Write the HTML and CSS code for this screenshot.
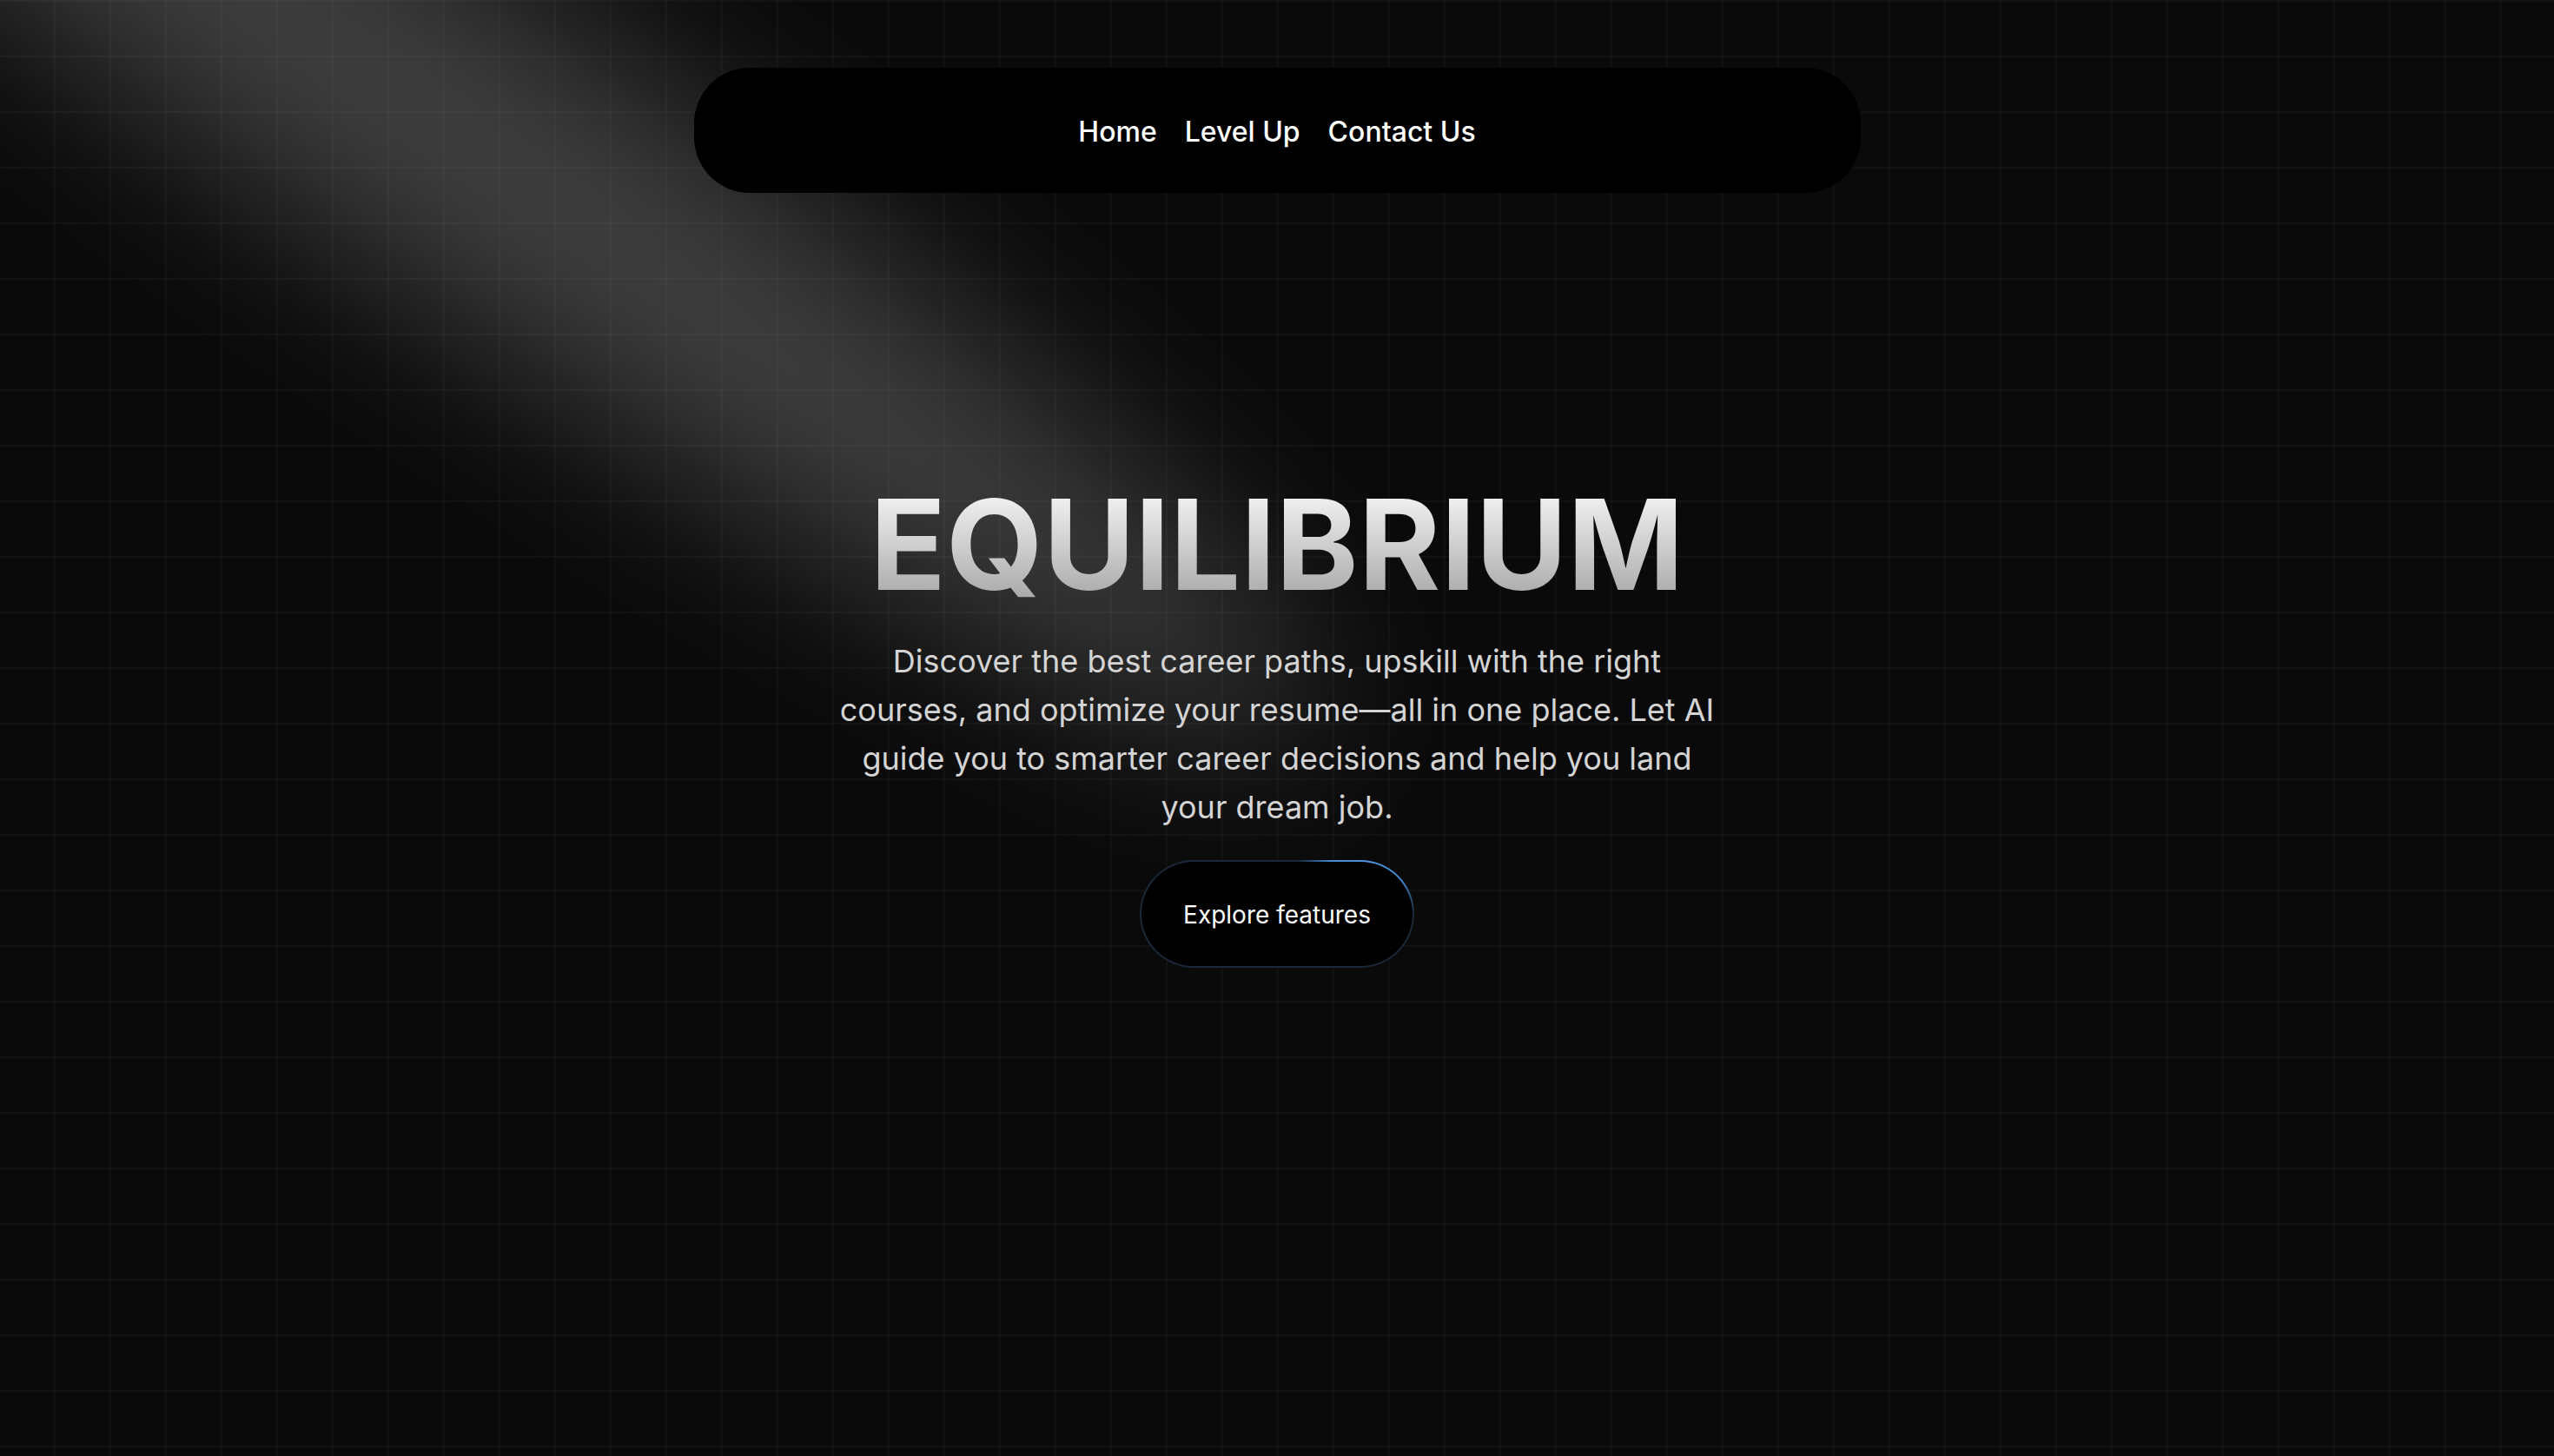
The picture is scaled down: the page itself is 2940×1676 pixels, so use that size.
FILE: index.html
```html
<!DOCTYPE html>
<html lang="en">
<head>
<meta charset="utf-8">
<title>Equilibrium</title>
<link rel="stylesheet" href="styles.css">
</head>
<body>
<div class="page">
  <svg class="spotlight" viewBox="0 0 3787 2842" fill="none" xmlns="http://www.w3.org/2000/svg">
    <g filter="url(#spotBlur)">
      <ellipse cx="1924.71" cy="273.501" rx="1924.71" ry="273.501" transform="matrix(-0.822377 -0.568943 -0.568943 0.822377 3631.88 2291.09)" fill="white" fill-opacity="0.21"></ellipse>
    </g>
    <defs>
      <filter id="spotBlur" x="0.860352" y="0.838989" width="3785.16" height="2840.26" filterUnits="userSpaceOnUse" color-interpolation-filters="sRGB">
        <feFlood flood-opacity="0" result="BackgroundImageFix"></feFlood>
        <feBlend mode="normal" in="SourceGraphic" in2="BackgroundImageFix" result="shape"></feBlend>
        <feGaussianBlur stdDeviation="151"></feGaussianBlur>
      </filter>
    </defs>
  </svg>

  <nav class="nav">
    <a class="nav-link" href="#">Home</a>
    <a class="nav-link" href="#">Level Up</a>
    <a class="nav-link" href="#">Contact Us</a>
  </nav>

  <main class="hero">
    <h1 class="title">EQUILIBRIUM</h1>
    <p class="lead">Discover the best career paths, upskill with the right courses, and optimize your resume—all in one place. Let AI guide you to smarter career decisions and help you land your dream job.</p>
    <button class="cta">Explore features</button>
  </main>
</div>
</body>
</html>
```

FILE: styles.css
```css
* { box-sizing: border-box; }

html, body {
  margin: 0;
  padding: 0;
  background: #0a0a0a;
}

body {
  font-family: Inter, "Noto Sans", "Liberation Sans", sans-serif;
  -webkit-font-smoothing: antialiased;
}

.page {
  position: relative;
  width: 100%;
  height: 1676px;
  overflow: hidden;
  background-color: #0a0a0a;
  background-image:
    linear-gradient(to right, transparent 62px, rgba(255,255,255,0.028) 62px),
    linear-gradient(to bottom, rgba(255,255,255,0.028) 2px, transparent 2px);
  background-size: 64px 64px;
  display: flex;
  flex-direction: column;
  align-items: center;
}

.spotlight {
  position: absolute;
  left: -754.8px;
  top: -803.4px;
  width: 2469.6px;
  height: 1853.4px;
  pointer-events: none;
  z-index: 1;
}

.nav {
  position: relative;
  z-index: 10;
  margin-top: 78px;
  width: 1343px;
  height: 144px;
  padding-top: 4px;
  border-radius: 64px;
  background: #000;
  display: flex;
  align-items: center;
  justify-content: center;
  gap: 32px;
}

.nav-link {
  color: #fff;
  text-decoration: none;
  font-size: 32px;
  font-weight: 500;
  line-height: 1;
}

.hero {
  position: relative;
  z-index: 10;
  margin-top: 333px;
  display: flex;
  flex-direction: column;
  align-items: center;
}

.title {
  margin: 0;
  font-size: 144px;
  line-height: 1;
  font-weight: 700;
  text-align: center;
  background: linear-gradient(to bottom, #fafafa, #a3a3a3);
  -webkit-background-clip: text;
  background-clip: text;
  color: transparent;
}

.lead {
  margin: 34px 0 0;
  max-width: 1024px;
  font-size: 36px;
  line-height: 56px;
  color: #d4d4d4;
  text-align: center;
  font-weight: 400;
}

.cta {
  margin-top: 33px;
  width: 316px;
  height: 124px;
  border-radius: 62px;
  border: 2px solid transparent;
  background:
    linear-gradient(#000, #000) padding-box,
    radial-gradient(ellipse 26% 62% at 84% 0%, #4f96e0 0%, #4289d0 55%, rgba(30,44,64,0) 100%) border-box,
    linear-gradient(#1b283a, #1b283a) border-box;
  color: #fff;
  font-family: Inter, "Noto Sans", "Liberation Sans", sans-serif;
  font-size: 28px;
  font-weight: 400;
  display: flex;
  align-items: center;
  justify-content: center;
  cursor: pointer;
  padding: 2px 0 0;
}
```
